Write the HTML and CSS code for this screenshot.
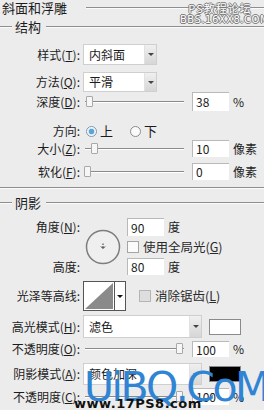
FILE: index.html
```html
<!DOCTYPE html>
<html lang="zh">
<head>
<meta charset="utf-8">
<link rel="stylesheet" href="styles.css">
</head>
<body>
<div class="panel">
  <div class="title"><span>斜面和浮雕</span><i class="rule grow t-rule"></i></div>
  <div class="ghead"><i class="rule lead"></i><span class="gname">结构</span><i class="rule grow"></i></div>

  <div class="row r-style">
    <span class="lbl">样式(<u>T</u>):</span>
    <div class="select s-short"><span class="sval">内斜面</span><b class="drop"><i class="tri"></i></b></div>
  </div>
  <div class="row r-method">
    <span class="lbl">方法(<u>Q</u>):</span>
    <div class="select s-short"><span class="sval">平滑</span><b class="drop"><i class="tri"></i></b></div>
  </div>
  <div class="row r-depth">
    <span class="lbl">深度(<u>D</u>):</span>
    <div class="slider"><i class="track"></i><i class="thumb" style="left:6px"></i></div>
    <span class="num">38</span><span class="unit">%</span>
  </div>
  <div class="row r-dir">
    <span class="lbl">方向:</span>
    <span class="radio on"></span><span class="rtext">上</span>
    <span class="radio r2"></span><span class="rtext">下</span>
  </div>
  <div class="row r-size">
    <span class="lbl">大小(<u>Z</u>):</span>
    <div class="slider"><i class="track"></i><i class="thumb" style="left:11px"></i></div>
    <span class="num">10</span><span class="unit">像素</span>
  </div>
  <div class="row r-soft">
    <span class="lbl">软化(<u>F</u>):</span>
    <div class="slider"><i class="track"></i><i class="thumb" style="left:4px"></i></div>
    <span class="num">0</span><span class="unit">像素</span>
  </div>

  <i class="rule sep"></i>
  <div class="ghead g2"><i class="rule lead"></i><span class="gname">阴影</span><i class="rule grow"></i></div>

  <div class="angle">
    <span class="lbl a-l1">角度(<u>N</u>):</span>
    <div class="dial">
      <svg width="36" height="36" viewBox="0 0 36 36">
        <circle cx="18" cy="18" r="16.5" fill="#efefef" stroke="#7d7d7d" stroke-width="1.5"/>
        <path d="M18 14.5v1.5M16 17.5l2 2 2-2M18 17v2" stroke="#333" stroke-width="1" fill="none"/>
      </svg>
    </div>
    <div class="a-f1"><span class="num">90</span><span class="unit">度</span></div>
    <div class="a-f2"><span class="check"></span><span class="ctext">使用全局光(<u>G</u>)</span></div>
    <span class="lbl a-l3">高度:</span>
    <div class="a-f3"><span class="num">80</span><span class="unit">度</span></div>
  </div>

  <div class="row r-contour">
    <span class="lbl">光泽等高线:</span>
    <div class="contour">
      <svg class="cbox" width="32" height="30" viewBox="0 0 32 30">
        <rect x="0.5" y="0.5" width="31" height="29" fill="#fff" stroke="#555"/>
        <path d="M2 28L30 2V28Z" fill="#8a8a8a"/>
      </svg>
      <b class="cdrop"><i class="tri"></i></b>
    </div>
    <span class="check dis"></span><span class="ctext">消除锯齿(<u>L</u>)</span>
  </div>

  <div class="row r-hmode">
    <span class="lbl">高光模式(<u>H</u>):</span>
    <div class="select s-long"><span class="sval">滤色</span><b class="drop"><i class="tri"></i></b></div>
    <span class="swatch white"></span>
  </div>
  <div class="row r-op1">
    <span class="lbl">不透明度(<u>O</u>):</span>
    <div class="slider"><i class="track"></i><i class="thumb" style="left:96px"></i></div>
    <span class="num">100</span><span class="unit">%</span>
  </div>
  <div class="row r-smode">
    <span class="lbl">阴影模式(<u>A</u>):</span>
    <div class="select s-long"><span class="sval">颜色加深</span><b class="drop"><i class="tri"></i></b></div>
    <span class="swatch black"></span>
  </div>
  <div class="row r-op2">
    <span class="lbl">不透明度(<u>C</u>):</span>
    <div class="slider"><i class="track"></i><i class="thumb" style="left:96px"></i></div>
    <span class="num">100</span><span class="unit">%</span>
  </div>
</div>

<div class="wm-top"><div>PS教程论坛</div><div class="wm-url">BBS.16XX8.COM</div></div>
<div class="wm-big">UiBQ.CoM</div>
<div class="wm-www">www.17PS8.com</div>
</body>
</html>
```
FILE: styles.css
```css
* { box-sizing: border-box; }
html, body { margin: 0; padding: 0; }
body {
  width: 264px;
  height: 410px;
  overflow: hidden;
  position: relative;
  background: #ececec;
  color: #1c1c1c;
  font-family: "Noto Sans CJK SC", "Noto Sans", sans-serif;
  font-size: 12px;
  line-height: 14px;
}
u { text-decoration: underline; text-underline-offset: 1px; }
i, b { display: block; font-style: normal; }

.panel { display: flex; flex-direction: column; }

.rule { height: 2px; border-top: 1px solid #8e8e8e; border-bottom: 1px solid #fbfbfb; }
.grow { flex: 1; }

.title { height: 16px; display: flex; align-items: center; padding-left: 2px; font-size: 13px; line-height: 16px; }
.t-rule { margin-left: 19px; }

.ghead { height: 21px; display: flex; align-items: center; }
.ghead .lead { width: 12px; }
.gname { margin: 0 5px 0 3px; font-size: 13px; }

.row { display: flex; align-items: center; }
.lbl { width: 80px; flex: none; text-align: right; white-space: nowrap; }

.r-style { margin-top: 7px; height: 21px; }
.r-method { margin-top: 7px; height: 20px; }
.r-depth { height: 19px; }
.r-dir { margin-top: 11px; height: 18px; }
.r-size { height: 17px; }
.r-soft { margin-top: 6px; height: 17px; }
.sep { margin-top: 7px; }
.g2 { margin-top: 3px; height: 22px; }

/* select */
.select {
  margin-left: 3px;
  height: 100%;
  display: flex;
  align-items: center;
  background: #fff;
  border: 1px solid #cfcfcf;
}
.s-short { width: 74px; }
.s-long { width: 119px; }
.sval { flex: 1; padding-left: 5px; }
.drop {
  width: 12px;
  height: 100%;
  background: linear-gradient(#f0f0f0, #d6d6d6);
  border-left: 1px solid #e2e2e2;
  display: flex;
  align-items: center;
  justify-content: center;
}
.tri { width: 0; height: 0; border-left: 3px solid transparent; border-right: 3px solid transparent; border-top: 3px solid #444; }

/* slider */
.slider { width: 112px; height: 100%; position: relative; display: flex; align-items: center; }
.track { margin-left: 5px; width: 99px; height: 2px; border-top: 1px solid #8a8a8a; border-bottom: 1px solid #fff; }
.thumb {
  position: absolute;
  top: 50%;
  margin-top: -6px;
  width: 7px;
  height: 11px;
  background: #f6f6f6;
  border: 1px solid #a8a8a8;
  border-radius: 1px;
}

.num {
  width: 37px;
  height: 100%;
  flex: none;
  background: #fff;
  border-top: 1px solid #b9b9b9;
  border-left: 1px solid #b9b9b9;
  padding-left: 3px;
  display: flex;
  align-items: center;
}
.unit { margin-left: 4px; }

/* radios */
.radio {
  width: 11px; height: 11px; flex: none;
  border-radius: 50%;
  border: 1px solid #8c8c8c;
  background: #fafafa;
  margin-left: 6px;
}
.radio.on { background: radial-gradient(circle, #5da4d8 0 2.5px, #cfe4f3 3px, #fafafa 4px); border-color: #7a98b4; }
.radio.r2 { margin-left: 17px; }
.rtext { margin-left: 3px; font-size: 13px; }

/* angle block */
.angle {
  margin-top: 4px;
  display: grid;
  grid-template-columns: 80px 47px 1fr;
  grid-template-rows: 18px 22px 17px;
}
.a-l1 { grid-column: 1; grid-row: 1; align-self: center; }
.a-l3 { grid-column: 1; grid-row: 3; align-self: center; }
.dial { grid-column: 2; grid-row: 1 / 4; align-self: center; padding-left: 5px; display: flex; }
.a-f1, .a-f3 { grid-column: 3; display: flex; align-items: center; }
.a-f1 { grid-row: 1; }
.a-f3 { grid-row: 3; }
.a-f2 { grid-column: 3; grid-row: 2; display: flex; align-items: center; }

.check {
  width: 12px; height: 12px; flex: none;
  background: #fbfbfb;
  border: 1px solid #a5a5a5;
}
.check.dis { background: #dedede; border-color: #b5b5b5; margin-left: 13px; }
.ctext { margin-left: 4px; font-size: 12.5px; color: #2a2a2a; }

/* contour */
.r-contour { margin-top: 6px; height: 30px; }
.contour { margin-left: 3px; display: flex; height: 30px; }
.cdrop {
  width: 11px; height: 30px;
  background: #fff;
  border: 1px solid #555;
  border-left: none;
  display: flex; align-items: center; justify-content: center;
}
.cdrop .tri { border-top-color: #111; }

.r-hmode { margin-top: 4px; height: 23px; }
.r-op1 { margin-top: 3px; height: 16px; }
.r-smode { margin-top: 6px; height: 22px; }
.r-op2 { margin-top: 3px; height: 17px; }

.swatch { margin-left: 7px; width: 32px; height: 16px; border: 1px solid #8a8a8a; }
.swatch.white { background: #fff; }
.swatch.black { background: #000; }

/* watermarks overlaying the screenshot */
.wm-top {
  position: absolute;
  left: 180px;
  top: 3px;
  width: 80px;
  text-align: center;
  font-family: "DejaVu Sans", sans-serif;
  font-size: 10px;
  line-height: 11px;
  color: #fff;
  text-shadow: 1px 0 #777, -1px 0 #777, 0 1px #777, 0 -1px #777;
}
.wm-top div:first-child { font-family: "Noto Sans CJK SC", sans-serif; font-size: 11px; letter-spacing: 1px; }
.wm-url { letter-spacing: 0.5px; }
.wm-big {
  position: absolute;
  left: 84px;
  top: 364px;
  font-family: "DejaVu Sans", sans-serif;
  font-size: 41px;
  line-height: 46px;
  letter-spacing: -2.5px;
  color: #2f84d4;
}
.wm-www {
  position: absolute;
  left: 74px;
  top: 397px;
  font-family: "DejaVu Sans", sans-serif;
  font-weight: bold;
  font-size: 13px;
  line-height: 13px;
  color: #111;
  letter-spacing: 0.5px;
}
```
